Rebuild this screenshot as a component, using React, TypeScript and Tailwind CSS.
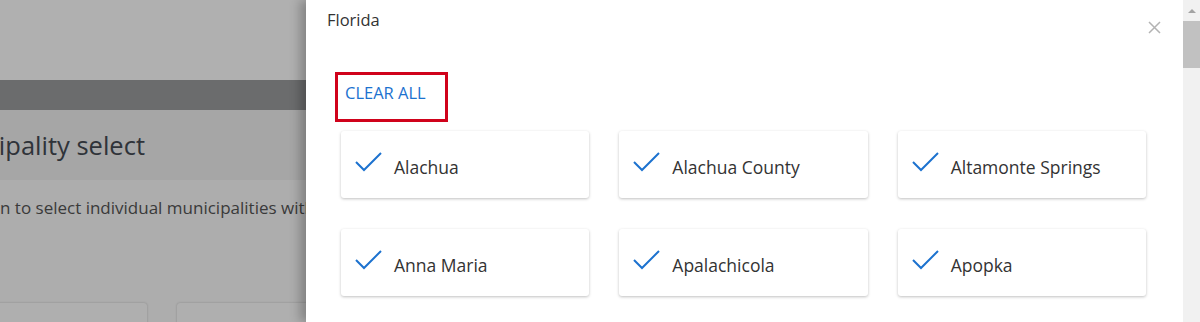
import React from "react";

const places = [
  "Alachua",
  "Alachua County",
  "Altamonte Springs",
  "Anna Maria",
  "Apalachicola",
  "Apopka",
];

function Check() {
  return (
    <svg width="28" height="20" viewBox="0 0 28 20" className="shrink-0">
      <path d="M1 10 L9 18 L26 1" fill="none" stroke="#1c72cf" strokeWidth="2" />
    </svg>
  );
}

export default function App() {
  return (
    <div
      className="flex w-[1200px] h-[322px] overflow-hidden bg-white"
      style={{ fontFamily: '"Open Sans", "Liberation Sans", sans-serif' }}
    >
      {/* dimmed page behind the drawer */}
      <div className="w-[306px] shrink-0 flex flex-col bg-[#adadad] overflow-hidden">
        <div className="h-[80px] shrink-0 bg-[#b0b0b0]" />
        <div className="h-[30px] shrink-0 bg-[#6b6c6d]" />
        <div className="h-[70px] shrink-0 bg-[#a6a6a6] flex items-center whitespace-nowrap">
          <span className="ml-[-74px] text-[25.5px] text-[#2f3339]">Municipality select</span>
        </div>
        <div className="h-[123px] shrink-0 pt-[15px] whitespace-nowrap text-[17px] text-[#3a3a3a]">
          n to select individual municipalities within the state
        </div>
        <div className="flex shrink-0 gap-[30px] ml-[-100px]">
          <div className="w-[247px] h-[40px] shrink-0 rounded-[3px] bg-[#afafaf] shadow-[0_0_2px_rgba(0,0,0,0.25)]" />
          <div className="w-[247px] h-[40px] shrink-0 rounded-[3px] bg-[#afafaf] shadow-[0_0_2px_rgba(0,0,0,0.25)]" />
        </div>
      </div>

      {/* drawer */}
      <div className="flex-1 flex bg-white shadow-[-6px_0_10px_rgba(0,0,0,0.25)] z-10">
        <div className="flex-1 flex flex-col">
          <div className="flex items-start justify-between pl-[21px] pr-[22px] pt-[8px]">
            <span className="text-[16.5px] leading-[24px] text-[#333]">Florida</span>
            <span className="mt-[13px]">
              <svg width="13" height="13" viewBox="0 0 13 13">
                <path d="M1 1 L12 12 M12 1 L1 12" stroke="#b3b3b3" strokeWidth="1.5" />
              </svg>
            </span>
          </div>
          <div className="pl-[29px] mt-[38px]">
            <button className="w-[113px] h-[50px] border-[3px] border-[#d0021b] text-left pl-[7px] pb-[8px] text-[16.5px] text-[#1c72cf]">
              CLEAR ALL
            </button>
          </div>
          <div className="grid grid-cols-3 gap-x-[30px] gap-y-[31px] pl-[35px] pr-[37px] mt-[9px]">
            {places.map((p) => (
              <div
                key={p}
                className="h-[67px] rounded-[3px] bg-white shadow-[0_1px_3px_rgba(0,0,0,0.25)] flex items-start pl-[14px] pt-[21px]"
              >
                <Check />
                <span className="ml-[11px] mt-[0px] text-[17.5px] leading-[30px] text-[#333]">{p}</span>
              </div>
            ))}
          </div>
        </div>

        {/* scrollbar */}
        <div className="w-[17px] bg-[#f1f1f1] flex flex-col items-center">
          <div className="h-[21px] flex items-center justify-center">
            <div className="w-0 h-0 border-l-[4px] border-r-[4px] border-b-[4px] border-l-transparent border-r-transparent border-b-[#a3a3a3]" />
          </div>
          <div className="w-[17px] h-[47px] bg-[#c1c1c1]" />
        </div>
      </div>
    </div>
  );
}
